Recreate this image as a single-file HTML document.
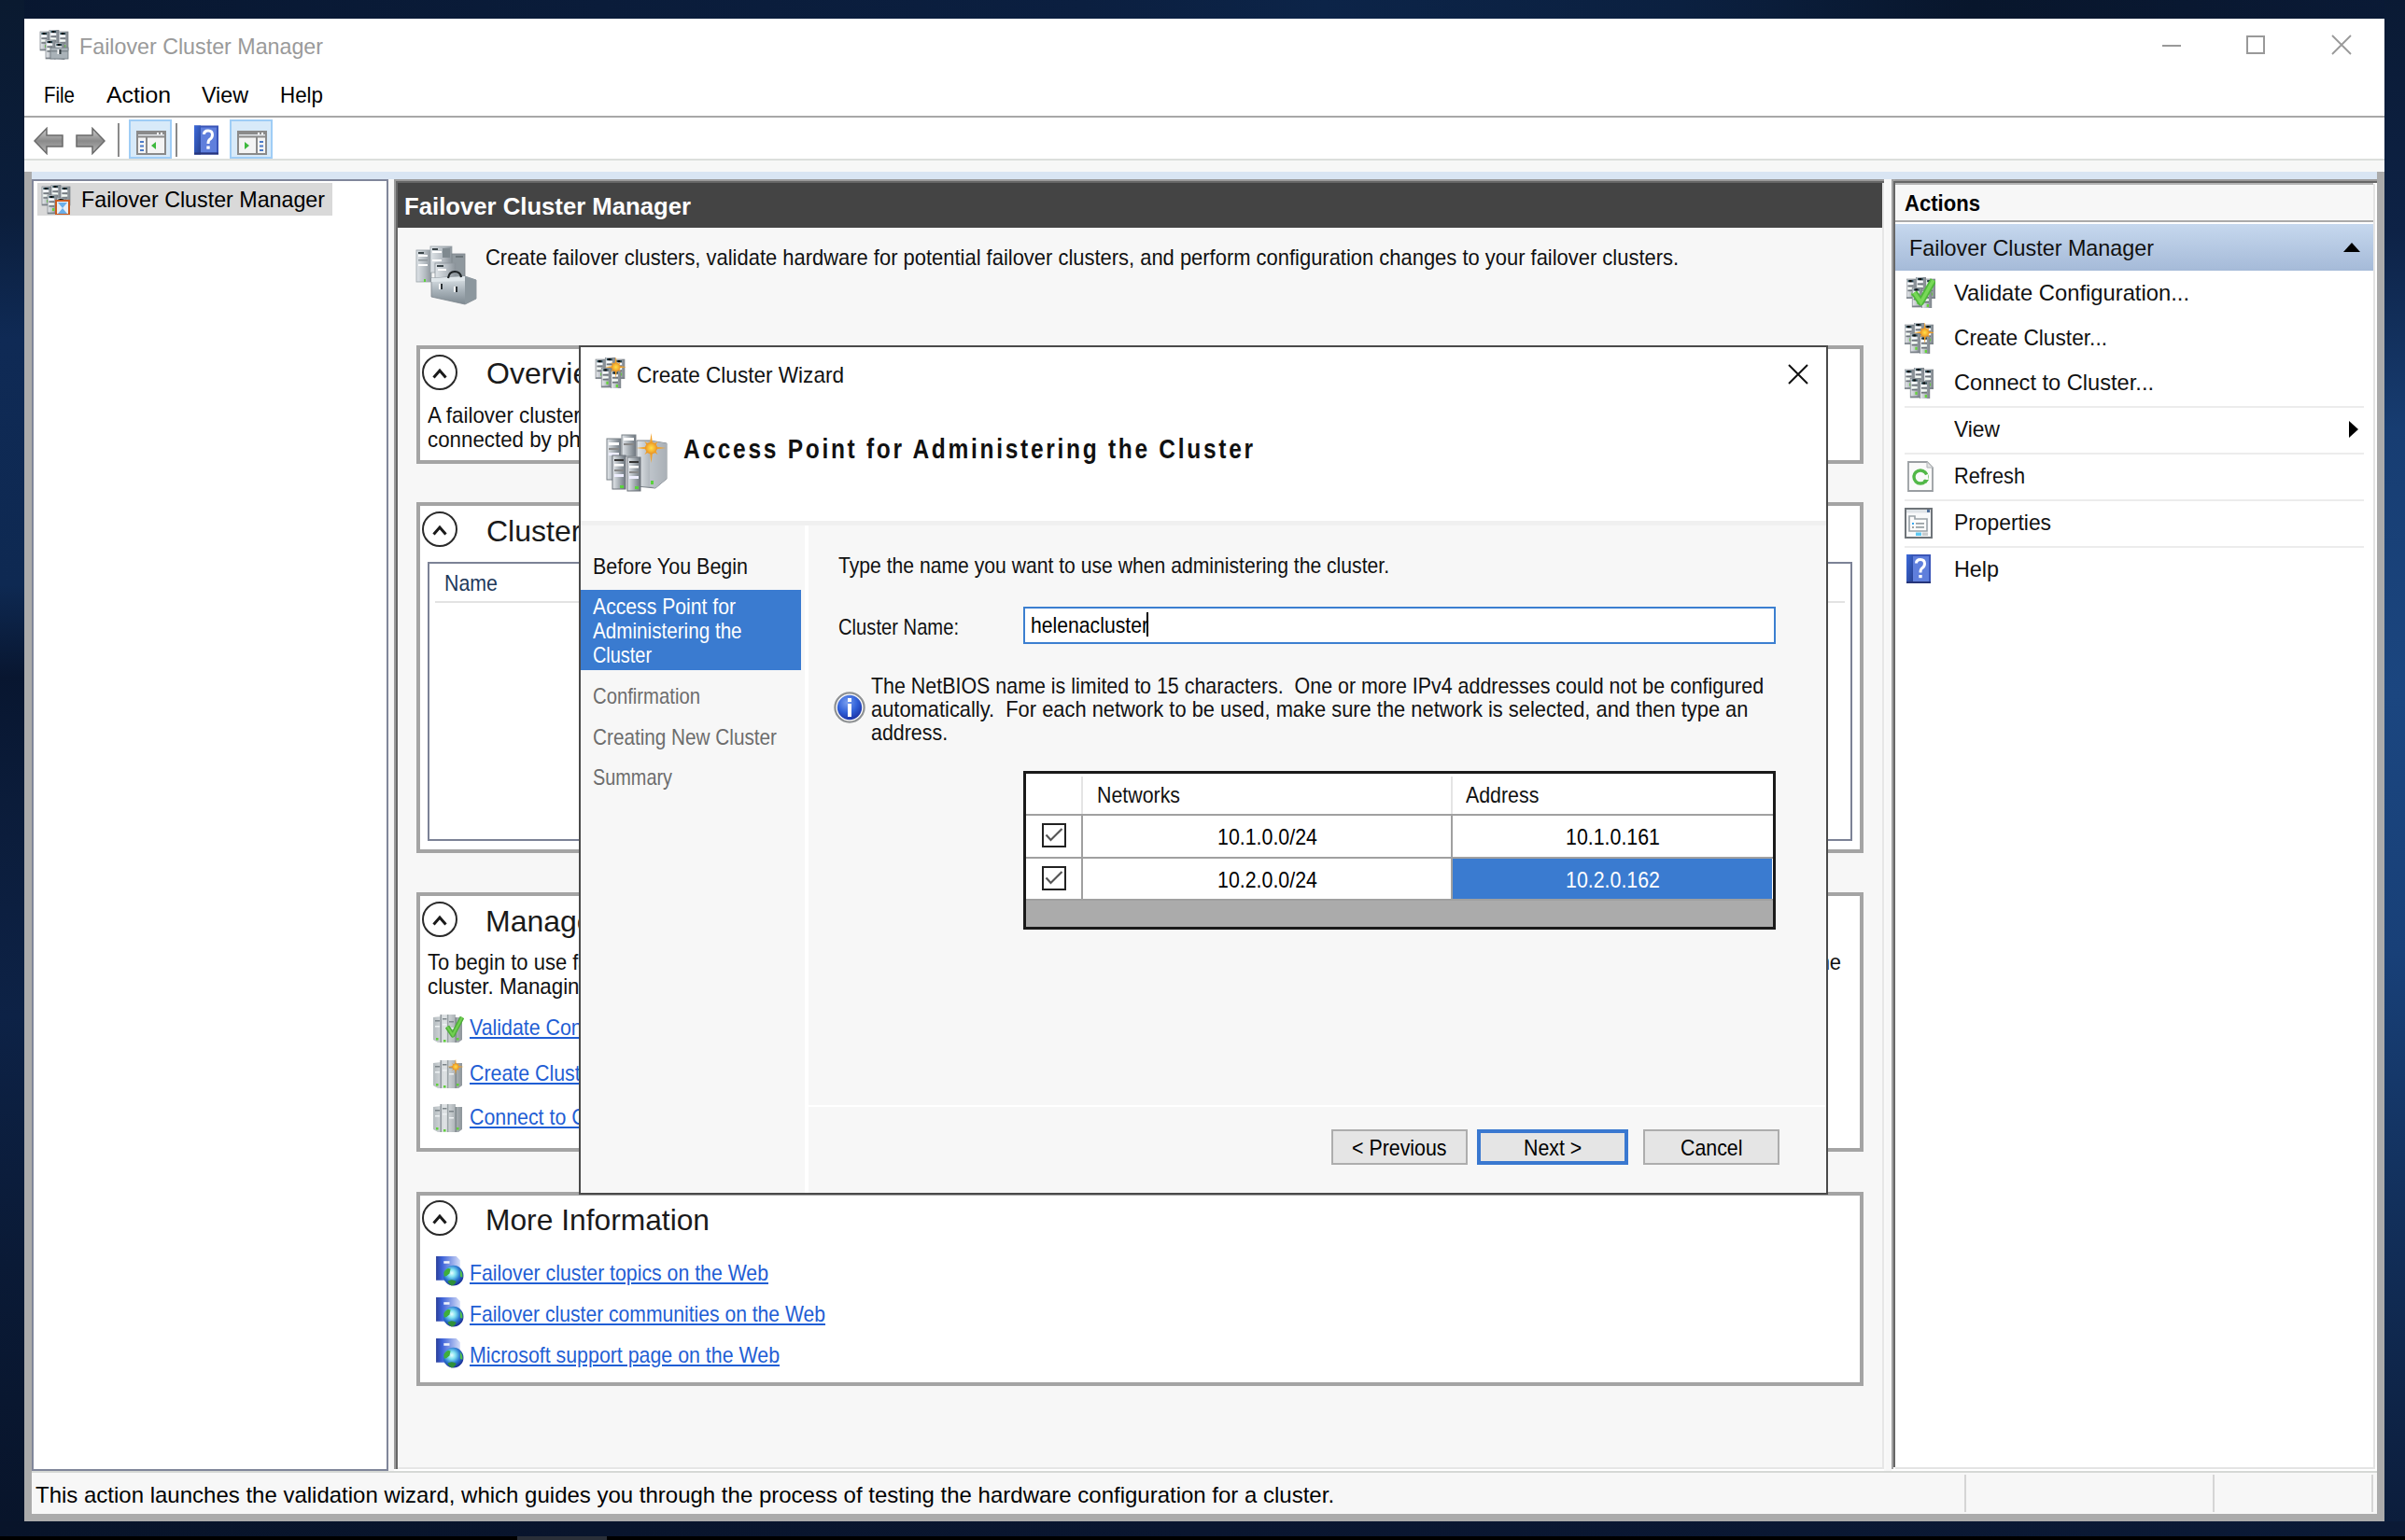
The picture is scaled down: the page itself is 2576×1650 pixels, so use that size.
<!DOCTYPE html>
<html><head><meta charset="utf-8"><style>
html,body{margin:0;padding:0;}
body{width:2576px;height:1650px;position:relative;overflow:hidden;
 background:#0a1830;font-family:"Liberation Sans",sans-serif;}
body div{position:absolute;box-sizing:border-box;}
.t{white-space:pre;line-height:1;}
svg{position:absolute;}
</style></head><body>
<div style="left:0;top:0;width:2576px;height:1650px;background:#0a1a34;"></div>
<div style="left:0;top:0;width:2576px;height:20px;background:linear-gradient(90deg,#081730 0%,#0a1c3a 25%,#0b1f40 45%,#0c2448 55%,#0b2040 70%,#08162c 82%,#0a1a36 100%);"></div>
<div style="left:0;top:0;width:26px;height:1650px;background:linear-gradient(180deg,#0a1a30 0%,#0b1e3c 14%,#0f2a55 22%,#0e2952 38%,#081630 44%,#0b1c3a 52%,#0d2246 66%,#0a1a36 82%,#08142a 100%);"></div>
<div style="left:2554px;top:0;width:22px;height:1650px;background:linear-gradient(180deg,#0a1a34 0%,#0d2246 15%,#173d72 28%,#1b4680 45%,#184078 62%,#12305c 78%,#0b1c3a 100%);"></div>
<div style="left:0;top:1630px;width:2576px;height:16px;background:linear-gradient(90deg,#08142a 0%,#0a1630 50%,#0b1a36 100%);"></div>
<div style="left:0px;top:1646px;width:2576px;height:4px;background:#000;"></div>
<div style="left:554px;top:1646px;width:96px;height:4px;background:#2a2f38;"></div>
<div style="left:26px;top:20px;width:2528px;height:164px;background:#fff;"></div>
<div style="left:26px;top:184px;width:8px;height:1446px;background:#ababab;"></div>
<div style="left:2546px;top:184px;width:8px;height:1446px;background:#ababab;"></div>
<div style="left:26px;top:1622px;width:2528px;height:8px;background:#ababab;"></div>
<div class="t" style="left:85px;top:37.7px;font-size:24px;color:#9a9a9a;transform:scaleX(0.9688);transform-origin:0 0;">Failover Cluster Manager</div>
<div style="left:2316px;top:48px;width:20px;height:2px;background:#999;"></div>
<div style="left:2406px;top:38px;width:20px;height:20px;border:2px solid #999;"></div>
<svg style="left:2496px;top:36px" width="24" height="24"><path d="M2 2L22 22M22 2L2 22" stroke="#999" stroke-width="1.8"/></svg>
<div class="t" style="left:47px;top:89.7px;font-size:24px;color:#000;transform:scaleX(0.8534);transform-origin:0 0;">File</div>
<div class="t" style="left:114px;top:89.7px;font-size:24px;color:#000;transform:scaleX(1.0345);transform-origin:0 0;">Action</div>
<div class="t" style="left:216px;top:89.7px;font-size:24px;color:#000;transform:scaleX(0.9693);transform-origin:0 0;">View</div>
<div class="t" style="left:300px;top:89.7px;font-size:24px;color:#000;transform:scaleX(0.9320);transform-origin:0 0;">Help</div>
<div style="left:26px;top:124px;width:2528px;height:2px;background:#a8a8a8;"></div>
<div style="left:26px;top:170px;width:2528px;height:2px;background:#dcdfdc;"></div>
<div style="left:26px;top:172px;width:2528px;height:12px;background:#f7f7f7;"></div>
<div style="left:34px;top:184px;width:2512px;height:8px;background:#d9e5f3;"></div>
<div style="left:34px;top:1576px;width:2512px;height:2px;background:#d5d8d5;"></div>
<div style="left:34px;top:1578px;width:2512px;height:44px;background:#f7f7f7;"></div>
<div class="t" style="left:38px;top:1589.7px;font-size:24px;color:#000;transform:scaleX(0.9997);transform-origin:0 0;">This action launches the validation wizard, which guides you through the process of testing the hardware configuration for a cluster.</div>
<div style="left:2104px;top:1580px;width:2px;height:40px;background:#d5d5d5;"></div>
<div style="left:2370px;top:1580px;width:2px;height:40px;background:#d5d5d5;"></div>
<div style="left:2540px;top:1580px;width:2px;height:40px;background:#d5d5d5;"></div>
<svg width="0" height="0" style="position:absolute;left:0;top:0">
<defs>
 <linearGradient id="gtow" x1="0" x2="1" y1="0" y2="0">
  <stop offset="0" stop-color="#e6e9ec"/><stop offset="0.55" stop-color="#b9bec4"/><stop offset="1" stop-color="#7c838b"/>
 </linearGradient>
 <g id="tower">
  <rect x="0" y="0" width="10" height="20" fill="url(#gtow)"/>
  <rect x="7.6" y="0" width="2.4" height="20" fill="#8a9197"/>
  <rect x="0" y="0" width="10" height="20" fill="none" stroke="#7a8188" stroke-width="0.7"/>
  <rect x="1.4" y="1" width="5.8" height="2" fill="#24424c"/>
  <rect x="3" y="1" width="2.4" height="2" fill="#0a0a0a"/>
  <rect x="1.4" y="3.8" width="5.8" height="1.9" fill="#fbfdff"/>
  <rect x="1.4" y="6.4" width="5.8" height="1.5" fill="#6d747a"/>
  <rect x="1.4" y="8.6" width="5.8" height="1.9" fill="#f4fbf4"/>
  <rect x="1.4" y="11.2" width="5.8" height="1.5" fill="#6d747a"/>
  <rect x="5" y="14" width="2.2" height="3" fill="#64d43a"/>
  <rect x="0" y="18.6" width="10" height="1.4" fill="#7a8188"/>
 </g>
 <g id="cluster">
  <use href="#tower" x="0" y="2"/>
  <use href="#tower" x="10" y="0"/>
  <use href="#tower" x="20" y="2"/>
  <use href="#tower" x="6" y="11"/>
  <use href="#tower" x="16" y="14"/>
 </g>
 <radialGradient id="gsun" cx="0.5" cy="0.5" r="0.5">
  <stop offset="0" stop-color="#ffe04a"/><stop offset="0.6" stop-color="#f6b434"/><stop offset="1" stop-color="#e89020" stop-opacity="0.9"/>
 </radialGradient>
 <g id="sun">
  <path d="M0.00,-16.00 L1.61,-3.88 L7.07,-7.07 L3.88,-1.61 L16.00,0.00 L3.88,1.61 L7.07,7.07 L1.61,3.88 L0.00,16.00 L-1.61,3.88 L-7.07,7.07 L-3.88,1.61 L-16.00,0.00 L-3.88,-1.61 L-7.07,-7.07 L-1.61,-3.88Z" fill="#f2a22a"/>
  <circle r="6.5" fill="url(#gsun)"/>
 </g>
 <linearGradient id="ghelp" x1="0" x2="1" y1="0" y2="1">
  <stop offset="0" stop-color="#3d6bdc"/><stop offset="1" stop-color="#26408f"/>
 </linearGradient>
 <g id="help">
  <rect x="0" y="0" width="26" height="31" fill="#3a55b8"/>
  <rect x="0" y="0" width="7" height="31" fill="url(#ghelp)"/>
  <rect x="7" y="2" width="17" height="27" fill="#5f7fdc"/>
  <rect x="0" y="29" width="26" height="2" fill="#26357a"/>
  <path d="M10.5,9.5 Q10.5,5.5 15,5.5 Q19.5,5.5 19.5,10 Q19.5,13 16.5,15 Q15,16 15,19.5" fill="none" stroke="#fff" stroke-width="3"/>
  <rect x="13.3" y="22" width="3.4" height="3.2" fill="#fff"/>
 </g>
 <radialGradient id="gglobe" cx="0.42" cy="0.38" r="0.62">
  <stop offset="0" stop-color="#e8ffff"/><stop offset="0.3" stop-color="#7fe0f0"/><stop offset="0.65" stop-color="#2a78d0"/><stop offset="1" stop-color="#1a2f98"/>
 </radialGradient>
 <linearGradient id="gdoc" x1="0" x2="1" y1="0" y2="0">
  <stop offset="0" stop-color="#2a3f9a"/><stop offset="0.25" stop-color="#3d62d8"/><stop offset="1" stop-color="#d6def8"/>
 </linearGradient>
 <g id="globe">
  <path d="M1,1 L22,1 L26,5 L26,26 L1,26Z" fill="url(#gdoc)"/>
  <rect x="9" y="6" width="6" height="2.5" fill="#fff" opacity="0.9"/>
  <circle cx="19" cy="21" r="10.5" fill="url(#gglobe)"/>
  <path d="M9,18 Q12,12 16,14 L15,19 Q12,22 9.5,22Z" fill="#3fae3a"/>
  <path d="M13,27 Q17,24 22,27 Q21,31 17,31.5 Q14,30 13,27Z" fill="#2f8f3a"/>
  <path d="M26,15 Q29,18 28.5,23 L26,22Z" fill="#4fbf4a"/>
 </g>
 <linearGradient id="ggray" x1="0" x2="1" y1="0" y2="0">
  <stop offset="0" stop-color="#b4bbbf"/><stop offset="0.4" stop-color="#dfe3e5"/><stop offset="1" stop-color="#8d959a"/>
 </linearGradient>
 <g id="gcluster">
  <path d="M1,4 L9,3 L9,1 L25,1 L25,4 L32,4 L32,28 L28,31 L6,31 L1,28Z" fill="url(#ggray)"/>
  <rect x="8.5" y="1" width="1.4" height="30" fill="#8a9297"/>
  <rect x="16" y="1" width="1.4" height="30" fill="#9aa2a6"/>
  <rect x="24.5" y="4" width="1.4" height="27" fill="#7d858a"/>
  <rect x="3" y="7" width="5" height="1.5" fill="#7d858a"/><rect x="11" y="5" width="4.5" height="1.5" fill="#7d858a"/><rect x="18" y="8" width="5" height="1.5" fill="#7d858a"/>
  <rect x="3" y="13" width="5" height="1.5" fill="#eef2f4"/><rect x="11" y="11" width="4.5" height="1.5" fill="#eef2f4"/><rect x="18" y="15" width="5" height="1.5" fill="#eef2f4"/>
  <rect x="4" y="26" width="2.5" height="2.5" fill="#5fd03a"/><rect x="12" y="28" width="2.5" height="2.5" fill="#5fd03a"/><rect x="26" y="26" width="2.5" height="2.5" fill="#5fd03a"/>
 </g>
</defs></svg>
<svg style="left:36px;top:136px" width="32" height="30" viewBox="0 0 32 30"><defs><linearGradient id="garr" x1="0" y1="0" x2="0" y2="1"><stop offset="0" stop-color="#d0d0d0"/><stop offset="0.5" stop-color="#8a8a8a"/><stop offset="1" stop-color="#b8b8b8"/></linearGradient></defs><path d="M1,15 L14,1.5 L14,9 L31,9 L31,21 L14,21 L14,28.5Z" fill="url(#garr)" stroke="#6a6a6a" stroke-width="1.5"/></svg>
<svg style="left:81px;top:136px" width="32" height="30" viewBox="0 0 32 30"><path d="M31,15 L18,1.5 L18,9 L1,9 L1,21 L18,21 L18,28.5Z" fill="url(#garr)" stroke="#6a6a6a" stroke-width="1.5"/></svg>
<div style="left:126px;top:132px;width:2px;height:36px;background:#8a8a8a;"></div>
<div style="left:138px;top:128px;width:46px;height:42px;background:#d8eaf9;border:2px solid #9fcdf6;"></div>
<svg style="left:146px;top:140px" width="32" height="26" viewBox="0 0 32 26"><rect x="1" y="1" width="30" height="24" fill="#f4f4f4" stroke="#8a8a8a" stroke-width="2"/><rect x="1" y="1" width="30" height="3" fill="#8a8a8a"/><rect x="2" y="4" width="28" height="1.5" fill="#dfe3e8"/><rect x="1" y="5.5" width="30" height="2" fill="#8a8a8a"/><rect x="22" y="2" width="2" height="2" fill="#fff"/><rect x="26" y="2" width="2" height="2" fill="#fff"/><rect x="10" y="7" width="2" height="18" fill="#8a8a8a"/><rect x="4" y="11" width="4" height="2" fill="#4a7ac8"/><rect x="4" y="15.5" width="4" height="2" fill="#4a7ac8"/><rect x="4" y="20" width="4" height="2" fill="#4a7ac8"/><path d="M21,12 L16,16 L21,20Z" fill="#3cb83c"/></svg>
<div style="left:188px;top:132px;width:2px;height:36px;background:#8a8a8a;"></div>
<svg style="left:208px;top:134px" width="26" height="32" viewBox="0 0 26 31"><use href="#help"/></svg>
<div style="left:246px;top:128px;width:46px;height:42px;background:#d8eaf9;border:2px solid #9fcdf6;"></div>
<svg style="left:254px;top:140px" width="32" height="26" viewBox="0 0 32 26"><rect x="1" y="1" width="30" height="24" fill="#f4f4f4" stroke="#8a8a8a" stroke-width="2"/><rect x="1" y="1" width="30" height="3" fill="#8a8a8a"/><rect x="2" y="4" width="28" height="1.5" fill="#dfe3e8"/><rect x="1" y="5.5" width="30" height="2" fill="#8a8a8a"/><rect x="22" y="2" width="2" height="2" fill="#fff"/><rect x="26" y="2" width="2" height="2" fill="#fff"/><rect x="20" y="7" width="2" height="18" fill="#8a8a8a"/><rect x="24" y="11" width="4" height="2" fill="#4a7ac8"/><rect x="24" y="15.5" width="4" height="2" fill="#4a7ac8"/><rect x="24" y="20" width="4" height="2" fill="#4a7ac8"/><path d="M8,12 L13,16 L8,20Z" fill="#3cb83c"/></svg>
<svg style="left:42px;top:32px" width="32" height="32" viewBox="0 0 30 32"><use href="#cluster"/><rect x="11" y="19" width="19" height="12" fill="#a9b2b8" stroke="#6d767d" stroke-width="0.8"/><rect x="11" y="22" width="19" height="1.5" fill="#7e878d"/><rect x="18.5" y="21" width="2" height="5" fill="#fff"/><rect x="20.5" y="21" width="2" height="5" fill="#2f3a3e"/></svg>
<div style="left:34px;top:192px;width:382px;height:1384px;background:#fff;border:2px solid #80869a;"></div>
<div style="left:40px;top:196px;width:316px;height:35px;background:#d9d9d9;"></div>
<svg style="left:44px;top:198px" width="32" height="32" viewBox="0 0 30 32"><use href="#cluster"/><rect x="15" y="17" width="14" height="15" fill="#e8eef5" stroke="#c85a1e" stroke-width="2"/><path d="M17,19 L27,19 L22,25 L27,31 L17,31 L22,25Z" fill="#6aaee8"/></svg>
<div class="t" style="left:87px;top:201.7px;font-size:24px;color:#000;transform:scaleX(0.9688);transform-origin:0 0;">Failover Cluster Manager</div>
<div style="left:416px;top:192px;width:6px;height:1384px;background:#f7f7f7;"></div>
<div style="left:422px;top:192px;width:1598px;height:1384px;background:#f7f7f7;"></div>
<div style="left:422px;top:192px;width:2px;height:1382px;background:#9a9a9a;"></div>
<div style="left:424px;top:192px;width:2px;height:1382px;background:#666;"></div>
<div style="left:422px;top:192px;width:1596px;height:2px;background:#9a9a9a;"></div>
<div style="left:424px;top:194px;width:1594px;height:2px;background:#666;"></div>
<div style="left:426px;top:196px;width:1590px;height:48px;background:#444;"></div>
<div style="left:2016px;top:196px;width:2px;height:1378px;background:#e6e6e6;"></div>
<div style="left:426px;top:1572px;width:1592px;height:2px;background:#e6e6e6;"></div>
<div style="left:422px;top:1574px;width:2124px;height:2px;background:#ffffff;"></div>
<div style="left:2018px;top:192px;width:8px;height:1384px;background:#f9f9f9;"></div>
<div class="t" style="left:433px;top:208.0px;font-size:26px;color:#fff;font-weight:700;transform:scaleX(0.9883);transform-origin:0 0;">Failover Cluster Manager</div>
<svg style="left:440px;top:256px" width="80" height="80" viewBox="0 0 80 80"><defs><linearGradient id="gtb" x1="0" y1="0" x2="0" y2="1"><stop offset="0" stop-color="#e2e8ec"/><stop offset="0.5" stop-color="#aab4bb"/><stop offset="1" stop-color="#7d8890"/></linearGradient>
      <linearGradient id="gtw" x1="0" x2="1"><stop offset="0" stop-color="#dfe4e8"/><stop offset="0.6" stop-color="#b3bac0"/><stop offset="1" stop-color="#8b939a"/></linearGradient></defs>
      <rect x="6" y="12" width="16" height="34" fill="url(#gtw)" stroke="#9aa2a8" stroke-width="0.8"/>
      <rect x="8" y="14" width="6" height="2" fill="#3a4448"/><rect x="8" y="17" width="10" height="2" fill="#fff"/><rect x="8" y="27" width="10" height="2" fill="#fff"/><rect x="8" y="22" width="10" height="1.5" fill="#8d959a"/>
      <rect x="14" y="43" width="2" height="3" fill="#5ad23c"/>
      <rect x="21" y="8" width="23" height="28" fill="url(#gtw)" stroke="#9aa2a8" stroke-width="0.8"/>
      <rect x="23" y="10" width="6" height="2" fill="#3a4448"/><rect x="23" y="13" width="10" height="2" fill="#fff"/><rect x="23" y="22" width="10" height="2" fill="#fff"/><rect x="34" y="10" width="8" height="10" fill="#7f898f"/>
      <rect x="44" y="16" width="14" height="26" fill="#8f989e" stroke="#7a8288" stroke-width="0.8"/><rect x="48" y="18" width="8" height="2" fill="#6b7479"/>
      <rect x="26" y="26" width="22" height="24" fill="url(#gtw)" stroke="#8d959b" stroke-width="0.8"/>
      <rect x="28" y="28" width="7" height="2" fill="#3a4448"/><rect x="29" y="32" width="9" height="2" fill="#fff"/>
      <path d="M22,42 L58,40 L70,44 L70,64 L58,70 L22,62Z" fill="url(#gtb)" stroke="#7d878e" stroke-width="0.8"/>
      <path d="M58,40 L70,44 L70,64 L58,70Z" fill="#8c979e"/>
      <path d="M22,42 L58,40 L58,45 L22,46Z" fill="#dfe6ea"/>
      <path d="M40,42 Q41,35 47,35 Q53,35 54,41" fill="none" stroke="#1e2326" stroke-width="2.2"/>
      <rect x="30" y="48" width="2" height="6" fill="#fff"/><rect x="32" y="48" width="2" height="6" fill="#2a3034"/>
      <rect x="46" y="51" width="2" height="6" fill="#fff"/><rect x="48" y="51" width="2" height="6" fill="#2a3034"/></svg>
<div class="t" style="left:520px;top:263.7px;font-size:24px;color:#111;transform:scaleX(0.9142);transform-origin:0 0;">Create failover clusters, validate hardware for potential failover clusters, and perform configuration changes to your failover clusters.</div>
<div style="left:446px;top:370px;width:1550px;height:127px;background:#fff;border:4px solid #a4a4a4;"></div>
<svg style="left:452px;top:380px" width="40" height="40" viewBox="0 0 40 40"><circle cx="19" cy="19" r="18" fill="#fff" stroke="#2a2a2a" stroke-width="2"/><path d="M12.5,24.5 L19,17 L25.5,24.5" fill="none" stroke="#1a1a1a" stroke-width="3"/></svg>
<div class="t" style="left:521px;top:383.9px;font-size:32px;color:#1a1a1a;">Overview</div>
<div style="left:458px;top:429.2px;width:1480px;height:31px;overflow:hidden"><div class="t" style="left:0;top:4px;font-size:24px;color:#111;transform:scaleX(0.9300);transform-origin:0 0;">A failover cluster is a set of independent computers that work together to increase the availability of server roles. The clustered</div></div>
<div style="left:458px;top:454.7px;width:1480px;height:31px;overflow:hidden"><div class="t" style="left:0;top:4px;font-size:24px;color:#111;transform:scaleX(0.9300);transform-origin:0 0;">connected by physical cables and by software. If one of the nodes fails, another node begins to provide service.</div></div>
<div style="left:446px;top:538px;width:1550px;height:376px;background:#fff;border:4px solid #a4a4a4;"></div>
<svg style="left:452px;top:548px" width="40" height="40" viewBox="0 0 40 40"><circle cx="19" cy="19" r="18" fill="#fff" stroke="#2a2a2a" stroke-width="2"/><path d="M12.5,24.5 L19,17 L25.5,24.5" fill="none" stroke="#1a1a1a" stroke-width="3"/></svg>
<div class="t" style="left:521px;top:552.9px;font-size:32px;color:#1a1a1a;">Clusters</div>
<div style="left:458px;top:602px;width:1526px;height:299px;background:#fff;border:2px solid #7c8296;"></div>
<div class="t" style="left:476px;top:613.2px;font-size:24px;color:#1e395b;transform:scaleX(0.8900);transform-origin:0 0;">Name</div>
<div style="left:466px;top:644px;width:1510px;height:2px;background:#e3e3e3;"></div>
<div style="left:446px;top:956px;width:1550px;height:278px;background:#fff;border:4px solid #a4a4a4;"></div>
<svg style="left:452px;top:966px" width="40" height="40" viewBox="0 0 40 40"><circle cx="19" cy="19" r="18" fill="#fff" stroke="#2a2a2a" stroke-width="2"/><path d="M12.5,24.5 L19,17 L25.5,24.5" fill="none" stroke="#1a1a1a" stroke-width="3"/></svg>
<div class="t" style="left:520px;top:970.9px;font-size:32px;color:#1a1a1a;">Manage a Cluster</div>
<div class="t" style="left:458px;top:1018.7px;font-size:24px;color:#111;transform:scaleX(0.9160);transform-origin:0 0;">To begin to use failover clustering, first validate your hardware configuration, and then create a cluster.  After these steps are complete, you can manage the</div>
<div style="left:458px;top:1041.2px;width:1490px;height:31px;overflow:hidden"><div class="t" style="left:0;top:4px;font-size:24px;color:#111;transform:scaleX(0.9300);transform-origin:0 0;">cluster. Managing a cluster can include copying roles to it from a cluster running Windows Server 2012 R2 or supported previous versions of</div></div>
<svg style="left:463px;top:1086px" width="34" height="33" viewBox="0 0 34 33"><use href="#gcluster"/><path d="M16,14 L22,23 L32,4" fill="none" stroke="#4fae3a" stroke-width="5" stroke-linejoin="round"/><path d="M16,14 L22,23 L32,4" fill="none" stroke="#72cf52" stroke-width="2.2"/></svg>
<div class="t" style="left:503px;top:1088.7px;font-size:24px;color:#1f5ed4;transform:scaleX(0.8900);transform-origin:0 0;text-decoration:underline;">Validate Configuration...</div>
<svg style="left:463px;top:1135px" width="34" height="33" viewBox="0 0 34 33"><use href="#gcluster"/><use href="#sun" transform="translate(25,8) scale(0.55)"/></svg>
<div class="t" style="left:503px;top:1137.7px;font-size:24px;color:#1f5ed4;transform:scaleX(0.8900);transform-origin:0 0;text-decoration:underline;">Create Cluster...</div>
<svg style="left:463px;top:1182px" width="34" height="33" viewBox="0 0 34 33"><use href="#gcluster"/></svg>
<div class="t" style="left:503px;top:1185.2px;font-size:24px;color:#1f5ed4;transform:scaleX(0.8900);transform-origin:0 0;text-decoration:underline;">Connect to Cluster...</div>
<div style="left:446px;top:1277px;width:1550px;height:208px;background:#fff;border:4px solid #a4a4a4;"></div>
<svg style="left:452px;top:1286px" width="40" height="40" viewBox="0 0 40 40"><circle cx="19" cy="19" r="18" fill="#fff" stroke="#2a2a2a" stroke-width="2"/><path d="M12.5,24.5 L19,17 L25.5,24.5" fill="none" stroke="#1a1a1a" stroke-width="3"/></svg>
<div class="t" style="left:520px;top:1290.9px;font-size:32px;color:#1a1a1a;transform:scaleX(0.9923);transform-origin:0 0;">More Information</div>
<svg style="left:466px;top:1345px" width="31" height="33" viewBox="0 0 30 32"><use href="#globe"/></svg>
<div class="t" style="left:503px;top:1352.4px;font-size:24px;color:#1f5ed4;transform:scaleX(0.8863);transform-origin:0 0;text-decoration:underline;">Failover cluster topics on the Web</div>
<svg style="left:466px;top:1389px" width="31" height="33" viewBox="0 0 30 32"><use href="#globe"/></svg>
<div class="t" style="left:503px;top:1395.7px;font-size:24px;color:#1f5ed4;transform:scaleX(0.8798);transform-origin:0 0;text-decoration:underline;">Failover cluster communities on the Web</div>
<svg style="left:466px;top:1433px" width="31" height="33" viewBox="0 0 30 32"><use href="#globe"/></svg>
<div class="t" style="left:503px;top:1439.7px;font-size:24px;color:#1f5ed4;transform:scaleX(0.8899);transform-origin:0 0;text-decoration:underline;">Microsoft support page on the Web</div>
<div style="left:2020px;top:192px;width:6px;height:1384px;background:#f7f7f7;"></div>
<div style="left:2026px;top:192px;width:520px;height:1382px;background:#fff;"></div>
<div style="left:2026px;top:192px;width:2px;height:1382px;background:#a0a0a0;"></div>
<div style="left:2028px;top:192px;width:2px;height:2px;background:#a0a0a0;"></div>
<div style="left:2028px;top:194px;width:2px;height:1378px;background:#666;"></div>
<div style="left:2030px;top:192px;width:516px;height:2px;background:#9a9a9a;"></div>
<div style="left:2030px;top:194px;width:516px;height:2px;background:#666;"></div>
<div style="left:2030px;top:196px;width:512px;height:2px;background:#b4b4b4;"></div>
<div style="left:2030px;top:198px;width:512px;height:38px;background:#f7f7f7;"></div>
<div class="t" style="left:2040px;top:205.7px;font-size:24px;color:#000;font-weight:700;transform:scaleX(0.9204);transform-origin:0 0;">Actions</div>
<div style="left:2030px;top:236px;width:512px;height:2px;background:#aaaaaa;"></div>
<div style="left:2030px;top:240px;width:512px;height:50px;background:linear-gradient(#c6d8ee,#a5bad8);"></div>
<div class="t" style="left:2045px;top:253.7px;font-size:24px;color:#111;transform:scaleX(0.9725);transform-origin:0 0;">Failover Cluster Manager</div>
<svg style="left:2509px;top:258px" width="20" height="14" viewBox="0 0 20 14"><path d="M1,12 L10,2 L19,12Z" fill="#000"/></svg>
<div class="t" style="left:2093px;top:301.7px;font-size:24px;color:#111;transform:scaleX(0.9907);transform-origin:0 0;">Validate Configuration...</div>
<div class="t" style="left:2093px;top:349.7px;font-size:24px;color:#111;transform:scaleX(0.9458);transform-origin:0 0;">Create Cluster...</div>
<div class="t" style="left:2093px;top:397.7px;font-size:24px;color:#111;transform:scaleX(0.9842);transform-origin:0 0;">Connect to Cluster...</div>
<div class="t" style="left:2093px;top:447.7px;font-size:24px;color:#111;transform:scaleX(0.9499);transform-origin:0 0;">View</div>
<div class="t" style="left:2093px;top:497.7px;font-size:24px;color:#111;transform:scaleX(0.9044);transform-origin:0 0;">Refresh</div>
<div class="t" style="left:2093px;top:547.7px;font-size:24px;color:#111;transform:scaleX(0.9508);transform-origin:0 0;">Properties</div>
<div class="t" style="left:2093px;top:597.7px;font-size:24px;color:#111;transform:scaleX(0.9725);transform-origin:0 0;">Help</div>
<svg style="left:2042px;top:297px" width="31" height="33" viewBox="0 0 30 32"><use href="#cluster"/><path d="M8,16 L15,26 L28,3" fill="none" stroke="#4fb83a" stroke-width="7" stroke-linejoin="round"/><path d="M8,16 L15,26 L28,3" fill="none" stroke="#78d858" stroke-width="3.5"/></svg>
<svg style="left:2040px;top:346px" width="31" height="33" viewBox="0 0 30 32"><use href="#cluster"/><use href="#sun" transform="translate(21,10) scale(0.72)"/></svg>
<svg style="left:2040px;top:394px" width="31" height="33" viewBox="0 0 30 32"><use href="#cluster"/></svg>
<svg style="left:2515px;top:450px" width="12" height="20" viewBox="0 0 12 20"><path d="M1,1 L11,10 L1,19Z" fill="#000"/></svg>
<svg style="left:2043px;top:494px" width="28" height="33" viewBox="0 0 28 33"><path d="M1,1 L21,1 L27,7 L27,32 L1,32Z" fill="#fafafa" stroke="#9a9ea2" stroke-width="1.8"/><path d="M21,1 L21,7 L27,7" fill="#e4e4e4" stroke="#b0b4b8" stroke-width="1"/><circle cx="14" cy="17" r="7" fill="none" stroke="#52b848" stroke-width="3.4"/><path d="M14,17 L22,14 L22,21Z" fill="#fafafa"/><path d="M17,20 L23,20 L20,24Z" fill="#52b848"/></svg>
<svg style="left:2040px;top:544px" width="30" height="33" viewBox="0 0 30 33"><rect x="1" y="1" width="28" height="31" fill="#f8f9fa" stroke="#6f7479" stroke-width="2"/><rect x="2" y="2" width="26" height="3.5" fill="#dfe4e8"/><rect x="24" y="2" width="3" height="3" fill="#4f6f9a"/><path d="M5,9 L11,9 L11,12 L24,12 L24,25 L5,25Z" fill="#fbfbfb" stroke="#9aa2a8" stroke-width="1.6"/><rect x="8" y="16" width="2" height="2" fill="#36a8f0"/><rect x="12" y="16" width="9" height="1.8" fill="#9aa2a6"/><rect x="8" y="20" width="2" height="2" fill="#9aa2a6"/><rect x="12" y="20" width="9" height="1.8" fill="#9aa2a6"/><rect x="12" y="26.5" width="6" height="3.5" fill="#5cc8f2"/><rect x="19" y="26.5" width="6" height="3.5" fill="#c8ccce"/></svg>
<svg style="left:2042px;top:594px" width="26" height="31" viewBox="0 0 26 31"><use href="#help"/></svg>
<div style="left:2040px;top:435px;width:492px;height:2px;background:#ececec;"></div>
<div style="left:2040px;top:485px;width:492px;height:2px;background:#ececec;"></div>
<div style="left:2040px;top:535px;width:492px;height:2px;background:#ececec;"></div>
<div style="left:2040px;top:585px;width:492px;height:2px;background:#ececec;"></div>
<div style="left:2542px;top:197px;width:2px;height:1377px;background:#e4e4e4;"></div>
<div style="left:2030px;top:1572px;width:514px;height:2px;background:#e4e4e4;"></div>
<div style="left:620px;top:370px;width:1338px;height:910px;background:#f7f7f7;border:2px solid #4a4a4a;"></div>
<div style="left:622px;top:372px;width:1334px;height:186px;background:#fff;"></div>
<div style="left:622px;top:558px;width:1334px;height:5px;background:#f0f0f0;"></div>
<svg style="left:637px;top:383px" width="33" height="33" viewBox="0 0 30 32"><use href="#cluster"/><use href="#sun" transform="translate(21,10) scale(0.72)"/></svg>
<div class="t" style="left:682px;top:389.7px;font-size:24px;color:#111;transform:scaleX(0.9405);transform-origin:0 0;">Create Cluster Wizard</div>
<svg style="left:1914px;top:389px" width="24" height="24" viewBox="0 0 24 24"><path d="M2,2 L22,22 M22,2 L2,22" stroke="#111" stroke-width="2"/></svg>
<svg style="left:640px;top:455px" width="80" height="80" viewBox="0 0 80 80"><defs><linearGradient id="gbig" x1="0" x2="1"><stop offset="0" stop-color="#e4e8ec"/><stop offset="0.5" stop-color="#a9b0b6"/><stop offset="1" stop-color="#6e767e"/></linearGradient></defs>
      <rect x="10" y="15" width="15" height="44" fill="url(#gbig)" stroke="#7a8188" stroke-width="1"/>
      <rect x="12" y="19" width="11" height="3" fill="#fff"/><rect x="12" y="25" width="11" height="2" fill="#888"/><rect x="12" y="30" width="11" height="3" fill="#eef"/>
      <rect x="26" y="11" width="15" height="23" fill="url(#gbig)" stroke="#7a8188" stroke-width="1"/>
      <rect x="28" y="14" width="11" height="3" fill="#fff"/><rect x="28" y="20" width="11" height="2" fill="#888"/>
      <path d="M42,17 L56,17 L74,20 L74,58 L62,68 L42,66Z" fill="url(#gbig)" stroke="#7a8188" stroke-width="1"/>
      <path d="M56,17 L74,20 L74,58 L62,68 L56,66Z" fill="#c3c9ce" opacity="0.7"/>
      <rect x="16" y="33" width="14" height="36" fill="url(#gbig)" stroke="#6a7178" stroke-width="1"/>
      <rect x="32" y="35" width="14" height="36" fill="url(#gbig)" stroke="#6a7178" stroke-width="1"/>
      <rect x="18" y="37" width="10" height="2" fill="#333"/><rect x="34" y="39" width="10" height="2" fill="#333"/>
      <rect x="18" y="42" width="10" height="2.5" fill="#fff"/><rect x="34" y="44" width="10" height="2.5" fill="#fff"/>
      <rect x="18" y="48" width="10" height="2" fill="#888"/><rect x="34" y="50" width="10" height="2" fill="#888"/>
      <rect x="18" y="53" width="10" height="3" fill="#eef"/><rect x="34" y="55" width="10" height="3" fill="#eef"/>
      <rect x="24" y="65" width="4" height="3" fill="#5ad23c"/><rect x="40" y="66" width="4" height="3" fill="#5ad23c"/>
      <rect x="57" y="60" width="3" height="4" fill="#5ad23c"/>
      <use href="#sun" transform="translate(57.5,25) scale(1.0)"/></svg>
<div class="t" style="left:732px;top:467.4px;font-size:29px;color:#111;font-weight:700;transform:scaleX(0.8455);transform-origin:0 0;letter-spacing:3.2px;">Access Point for Administering the Cluster</div>
<div style="left:622px;top:563px;width:240px;height:715px;background:#f7f7f7;"></div>
<div style="left:862px;top:563px;width:4px;height:715px;background:#ffffff;"></div>
<div class="t" style="left:635px;top:595.2px;font-size:24px;color:#111;transform:scaleX(0.8949);transform-origin:0 0;">Before You Begin</div>
<div style="left:622px;top:632px;width:236px;height:86px;background:#3a7bd0;"></div>
<div class="t" style="left:635px;top:637.7px;font-size:24px;color:#fff;transform:scaleX(0.8824);transform-origin:0 0;">Access Point for</div>
<div class="t" style="left:635px;top:663.7px;font-size:24px;color:#fff;transform:scaleX(0.8608);transform-origin:0 0;">Administering the</div>
<div class="t" style="left:635px;top:689.7px;font-size:24px;color:#fff;transform:scaleX(0.8288);transform-origin:0 0;">Cluster</div>
<div class="t" style="left:635px;top:733.7px;font-size:24px;color:#6d6d6d;transform:scaleX(0.8453);transform-origin:0 0;">Confirmation</div>
<div class="t" style="left:635px;top:777.7px;font-size:24px;color:#6d6d6d;transform:scaleX(0.8638);transform-origin:0 0;">Creating New Cluster</div>
<div class="t" style="left:635px;top:821.2px;font-size:24px;color:#6d6d6d;transform:scaleX(0.8279);transform-origin:0 0;">Summary</div>
<div class="t" style="left:898px;top:593.7px;font-size:24px;color:#111;transform:scaleX(0.8810);transform-origin:0 0;">Type the name you want to use when administering the cluster.</div>
<div class="t" style="left:898px;top:660.2px;font-size:24px;color:#111;transform:scaleX(0.8411);transform-origin:0 0;">Cluster Name:</div>
<div style="left:1096px;top:650px;width:806px;height:40px;background:#fff;border:2px solid #3c7fd0;"></div>
<div class="t" style="left:1104px;top:657.7px;font-size:24px;color:#000;transform:scaleX(0.8827);transform-origin:0 0;">helenacluster</div>
<div style="left:1228px;top:656px;width:2px;height:26px;background:#000;"></div>
<svg style="left:893px;top:741px" width="34" height="34" viewBox="0 0 34 34"><defs><radialGradient id="ginfo" cx="0.4" cy="0.3" r="0.75"><stop offset="0" stop-color="#7aa0f0"/><stop offset="0.55" stop-color="#3060d8"/><stop offset="1" stop-color="#1a2fa0"/></radialGradient></defs><circle cx="17" cy="17" r="15.6" fill="#fff" stroke="#8f9294" stroke-width="2.2"/><circle cx="17" cy="17" r="13.2" fill="url(#ginfo)"/><rect x="15" y="7" width="4" height="4" fill="#fff"/><rect x="15" y="13" width="4" height="14" fill="#fff"/></svg>
<div class="t" style="left:933px;top:722.7px;font-size:24px;color:#111;transform:scaleX(0.8925);transform-origin:0 0;">The NetBIOS name is limited to 15 characters.  One or more IPv4 addresses could not be configured</div>
<div class="t" style="left:933px;top:747.7px;font-size:24px;color:#111;transform:scaleX(0.9114);transform-origin:0 0;">automatically.  For each network to be used, make sure the network is selected, and then type an</div>
<div class="t" style="left:933px;top:772.7px;font-size:24px;color:#111;transform:scaleX(0.8925);transform-origin:0 0;">address.</div>
<div style="left:1096px;top:826px;width:806px;height:170px;background:#ababab;border:3px solid #1a1a1a;"></div>
<div style="left:1099px;top:829px;width:800px;height:44px;background:#fff;"></div>
<div style="left:1158px;top:832px;width:2px;height:41px;background:#e4e4e4;"></div>
<div style="left:1554px;top:832px;width:2px;height:41px;background:#e4e4e4;"></div>
<div class="t" style="left:1175px;top:839.7px;font-size:24px;color:#111;transform:scaleX(0.8899);transform-origin:0 0;">Networks</div>
<div class="t" style="left:1570px;top:839.7px;font-size:24px;color:#111;transform:scaleX(0.8899);transform-origin:0 0;">Address</div>
<div style="left:1099px;top:873px;width:800px;height:92px;background:#fff;"></div>
<div style="left:1099px;top:872px;width:800px;height:2px;background:#a0a0a0;"></div>
<div style="left:1099px;top:918px;width:800px;height:2px;background:#a0a0a0;"></div>
<div style="left:1099px;top:963px;width:800px;height:2px;background:#a0a0a0;"></div>
<div style="left:1158px;top:873px;width:2px;height:92px;background:#a0a0a0;"></div>
<div style="left:1554px;top:873px;width:2px;height:92px;background:#a0a0a0;"></div>
<div style="left:1556px;top:920px;width:342px;height:43px;background:#3a7bd0;"></div>
<svg style="left:1116px;top:882px" width="26" height="26" viewBox="0 0 26 26"><rect x="1" y="1" width="24" height="24" fill="#fff" stroke="#222" stroke-width="2"/><path d="M4.5,12.5 L9.5,18 L21.5,6" fill="none" stroke="#555" stroke-width="2.2"/></svg>
<svg style="left:1116px;top:928px" width="26" height="26" viewBox="0 0 26 26"><rect x="1" y="1" width="24" height="24" fill="#fff" stroke="#222" stroke-width="2"/><path d="M4.5,12.5 L9.5,18 L21.5,6" fill="none" stroke="#555" stroke-width="2.2"/></svg>
<div class="t" style="left:1303.55828125px;top:884.7px;font-size:24px;color:#000;transform:scaleX(0.8900);transform-origin:0 0;">10.1.0.0/24</div>
<div class="t" style="left:1303.55828125px;top:931.2px;font-size:24px;color:#000;transform:scaleX(0.8900);transform-origin:0 0;">10.2.0.0/24</div>
<div class="t" style="left:1676.52531875px;top:884.7px;font-size:24px;color:#000;transform:scaleX(0.8900);transform-origin:0 0;">10.1.0.161</div>
<div class="t" style="left:1676.52531875px;top:931.2px;font-size:24px;color:#fff;transform:scaleX(0.8900);transform-origin:0 0;">10.2.0.162</div>
<div style="left:866px;top:1184px;width:1090px;height:2px;background:#ffffff;"></div>
<div style="left:1426px;top:1210px;width:146px;height:38px;background:#e5e5e5;border:2px solid #adadad;"></div>
<div class="t" style="left:1448.24496875px;top:1217.7px;font-size:24px;color:#000;transform:scaleX(0.8900);transform-origin:0 0;">&lt; Previous</div>
<div style="left:1582px;top:1210px;width:162px;height:38px;background:#e5e5e5;border:4px solid #3a78d0;"></div>
<div class="t" style="left:1631.83609375px;top:1217.7px;font-size:24px;color:#000;transform:scaleX(0.8900);transform-origin:0 0;">Next &gt;</div>
<div style="left:1760px;top:1210px;width:146px;height:38px;background:#e5e5e5;border:2px solid #adadad;"></div>
<div class="t" style="left:1799.75683125px;top:1217.7px;font-size:24px;color:#000;transform:scaleX(0.8900);transform-origin:0 0;">Cancel</div></body></html>
